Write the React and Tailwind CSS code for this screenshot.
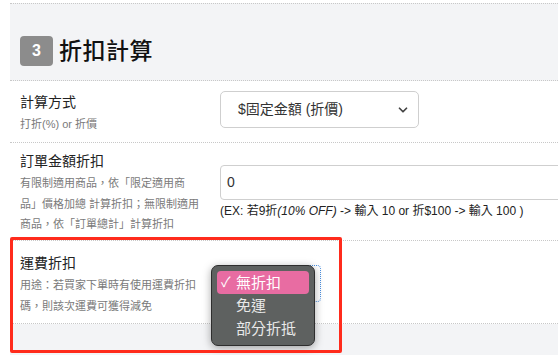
import { ChevronDown } from "lucide-react";

const font = { fontFamily: '"Liberation Sans", "Noto Sans CJK TC", sans-serif' };

function Row({ title, desc, children, className = "" }) {
  return (
    <div className={`flex border-b border-dotted border-[#c8c8c8] bg-white ${className}`}>
      <div className="w-[210px] shrink-0 pl-[10px] pr-[19px]">
        <div className="text-[14px] leading-[20px] text-[#222]">{title}</div>
        <div className="mt-[2px] text-[11px] leading-[20.5px] text-[#7a7a7a]">{desc}</div>
      </div>
      <div className="flex-1">{children}</div>
    </div>
  );
}

export default function App() {
  return (
    <div className="relative h-[355px] w-[558px] overflow-hidden bg-white" style={font}>
      <div className="ml-[10px] mt-[3px] w-[600px]">
        {/* Header */}
        <div className="flex h-[78px] items-center gap-[6px] border-y border-dotted border-[#c8c8c8] bg-[#f3f4f6] pl-[10px] pt-[18px]">
          <span className="flex h-[30px] w-[33px] items-center justify-center rounded-[4px] bg-[#8c8c8c] text-[16px] font-bold text-white">
            3
          </span>
          <span className="text-[23px] font-medium tracking-[0.5px] text-[#111]">折扣計算</span>
        </div>

        {/* 計算方式 */}
        <Row title="計算方式" desc="打折(%) or 折價" className="h-[62px] pt-[11px]">
          <div className="mt-[-1px] flex h-[37px] w-[199px] items-center justify-between rounded-[5px] border border-[#cfcfcf] bg-white pl-[17px] pr-[8px] text-[14px] text-[#333]">
            <span>$固定金額 (折價)</span>
            <ChevronDown size={14} strokeWidth={3} className="text-[#444]" />
          </div>
        </Row>

        {/* 訂單金額折扣 */}
        <Row
          title="訂單金額折扣"
          desc="有限制適用商品，依「限定適用商品」價格加總 計算折扣；無限制適用商品，依「訂單總計」計算折扣"
          className="h-[98px] pt-[8px]"
        >
          <div className="mt-[14px] flex h-[35px] items-center rounded-l-[4px] border border-[#cfcfcf] bg-white pl-[6px] text-[14px] text-[#333]">
            0
          </div>
          <div className="mt-[2px] text-[12px] text-[#222]">
            (EX: 若9折<i>(10% OFF)</i> -&gt; 輸入 10 or 折$100 -&gt; 輸入 100 )
          </div>
        </Row>

        {/* 運費折扣 */}
        <Row
          title="運費折扣"
          desc={
            <>
              用途：若買家下單時有使用運費折扣
              <br />
              碼，則該次運費可獲得減免
            </>
          }
          className="h-[83px] pt-[12px]"
        >
          <div className="mt-[12px] flex h-[37px] w-[101px] items-center justify-end rounded-[4px] border border-dotted border-[#4a90e2] bg-white pr-[3px]">
            <ChevronDown size={10} strokeWidth={3} className="text-[#333]" />
          </div>
        </Row>

        <div className="h-[40px] bg-[#f3f4f6]" />
      </div>

      {/* Native select popup */}
      <div className="absolute left-[211px] top-[265px] w-[104px] rounded-[7px] border border-[#2e2e2e] bg-[#5e6160] px-[5px] py-[5px] text-[15px] leading-[23px] text-[#e8e8e8] shadow-[0_2px_8px_rgba(0,0,0,0.35)]">
        <div className="flex items-center rounded-[4px] bg-[#e86ca2] pl-[4px] text-white">
          <span className="w-[15px] text-[14px]">✓</span>
          <span>無折扣</span>
        </div>
        <div className="pl-[19px]">免運</div>
        <div className="pl-[19px]">部分折抵</div>
      </div>

      {/* Red annotation box */}
      <div className="absolute left-[10px] top-[237px] h-[116px] w-[332px] rounded-[2px] border-[3px] border-[#ff2b1c]" />
    </div>
  );
}
